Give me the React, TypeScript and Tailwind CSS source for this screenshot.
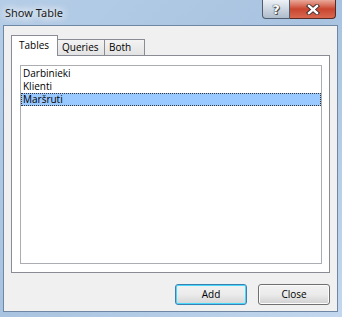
import React from 'react';

// Show Table dialog (Windows 7 Aero look)

const items = ['Darbinieki', 'Klienti', 'Maršruti'];

function CaptionButtons() {
  return (
    <div className="flex mr-[6px]">
      <div className="w-[28px] h-[19px] flex items-center justify-center rounded-bl-[4px] border border-t-0 border-[#4f5d6e] bg-gradient-to-b from-[#eef2f7] via-[#cdd6e1] to-[#aebccb]">
        <span className="text-white font-bold text-[13px] leading-none [font-family:'DejaVu_Sans',sans-serif] [text-shadow:0_0_1px_#333,0_0_1px_#333,1px_1px_0_#555]">
          ?
        </span>
      </div>
      <div className="w-[46px] h-[19px] flex items-center justify-center rounded-br-[4px] border border-l-0 border-t-0 border-[#5a2a22] bg-gradient-to-b from-[#e9a99a] via-[#c9452f] to-[#d8684f]">
        <svg width="14" height="11" viewBox="0 0 14 11">
          <path d="M3 2 L11 9 M11 2 L3 9" stroke="#3a2a28" strokeWidth="4.2" strokeLinecap="square" />
          <path d="M3 2 L11 9 M11 2 L3 9" stroke="#ffffff" strokeWidth="2.4" strokeLinecap="square" />
        </svg>
      </div>
    </div>
  );
}

function Tabs() {
  return (
    <div className="flex items-end h-[20px] relative z-10 text-[10px] text-black">
      <div className="w-[47px] h-[21px] mb-[-1px] bg-white border border-b-0 border-[#898c95] pl-[7px] pt-[2px] leading-[14px]">
        Tables
      </div>
      <div className="w-[47px] h-[16px] border border-l-0 border-b-0 border-[#898c95] bg-gradient-to-b from-[#f3f3f3] to-[#e3e3e3] pl-[4px] leading-[14px]">
        Queries
      </div>
      <div className="w-[40px] h-[16px] border border-l-0 border-b-0 border-[#898c95] bg-gradient-to-b from-[#f3f3f3] to-[#e3e3e3] pl-[4px] leading-[14px]">
        Both
      </div>
    </div>
  );
}

function DialogButton({ label, isDefault }: { label: string; isDefault?: boolean }) {
  return (
    <div
      className={
        'w-[72px] h-[21px] flex items-center justify-center rounded-[3px] border text-[10px] text-black ' +
        (isDefault
          ? 'border-[#3c7fb1] shadow-[inset_0_0_0_1px_#48d8fb] bg-gradient-to-b from-[#f2f2f2] via-[#ebebeb] to-[#d5d5d5]'
          : 'border-[#707070] shadow-[inset_0_0_0_1px_#fcfcfc] bg-gradient-to-b from-[#f2f2f2] via-[#ebebeb] to-[#d0d0d0]')
      }
    >
      {label}
    </div>
  );
}

export default function App() {
  return (
    <div className="w-[342px] h-[317px] flex flex-col bg-gradient-to-br from-[#b5cde7] via-[#a8c3e0] to-[#c3d8ee] [font-family:'Open_Sans',sans-serif]">
      {/* Title bar */}
      <div className="h-[25px] flex items-start justify-between">
        <span className="ml-[5px] mt-[5px] text-[11px] text-[#1b1b1b] [font-family:'Noto_Sans',sans-serif] [text-shadow:0_0_8px_#ffffff,0_0_8px_#ffffff,0_0_12px_#ffffff]">
          Show Table
        </span>
        <CaptionButtons />
      </div>

      {/* Client area */}
      <div className="flex-1 ml-[3px] mr-[4px] mb-[5px] border border-[#6f87a3] bg-[#f0f0f0] flex flex-col pt-[9px] px-[7px]">
        <Tabs />
        <div className="h-[218px] bg-white border border-[#898c95] pt-[9px] pl-[8px] pr-[7px] pb-[8px] flex">
          <div className="flex-1 border border-[#abadb3] bg-white pt-[1px] text-[10px] text-black">
            {items.map((name, i) => (
              <div
                key={name}
                className={
                  'h-[13px] leading-[13px] pl-[2px] ' +
                  (i === 2 ? 'bg-[#99c9ff] outline outline-1 outline-dotted outline-offset-[-1px] outline-[#333]' : '')
                }
              >
                {name}
              </div>
            ))}
          </div>
        </div>
        <div className="flex justify-end gap-[11px] mt-[11px]">
          <DialogButton label="Add" isDefault />
          <DialogButton label="Close" />
        </div>
      </div>
    </div>
  );
}
